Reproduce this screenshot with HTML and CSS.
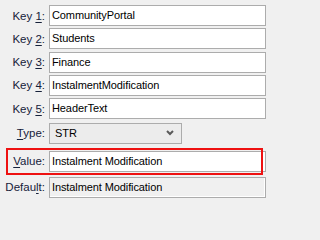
FILE: index.html
```html
<!DOCTYPE html>
<html>
<head>
<meta charset="utf-8">
<link rel="stylesheet" href="styles.css">
</head>
<body>
<div class="form">
  <div class="keys">
    <div class="row"><label class="lbl">Key <u>1</u>:</label><div class="field">CommunityPortal</div></div>
    <div class="row"><label class="lbl">Key <u>2</u>:</label><div class="field">Students</div></div>
    <div class="row"><label class="lbl">Key <u>3</u>:</label><div class="field">Finance</div></div>
    <div class="row"><label class="lbl">Key <u>4</u>:</label><div class="field">InstalmentModification</div></div>
    <div class="row"><label class="lbl">Key <u>5</u>:</label><div class="field">HeaderText</div></div>
  </div>
  <div class="row type-row"><label class="lbl"><u>T</u>ype:</label>
    <div class="select"><span>STR</span>
      <svg class="chev" width="8" height="6" viewBox="0 0 8 6"><path d="M1 1 L4 4 L7 1" fill="none" stroke="#5a5a5a" stroke-width="2"/></svg>
    </div>
  </div>
  <div class="row value-row"><label class="lbl"><u>V</u>alue:</label><div class="field">Instalment Modification</div><div class="highlight"></div></div>
  <div class="row default-row"><label class="lbl">Defau<u>l</u>t:</label><div class="field disabled">Instalment Modification</div></div>
</div>
</body>
</html>
```
FILE: styles.css
```css
html, body {
  margin: 0;
  padding: 0;
  background: #f0f0f0;
  width: 266px;
  height: 202px;
  overflow: hidden;
}
.form {
  font-family: "Liberation Sans", Arial, sans-serif;
  font-size: 11.5px;
  color: #000;
  padding-top: 5px;
  display: flex;
  flex-direction: column;
}
.keys {
  display: flex;
  flex-direction: column;
  gap: 2.33px;
}
.row {
  display: grid;
  grid-template-columns: 45px 217px;
  column-gap: 4px;
  align-items: center;
  height: 21px;
}
.lbl {
  text-align: right;
  color: #16213a;
  white-space: nowrap;
}
.lbl u {
  text-decoration-thickness: 1px;
  text-underline-offset: 2px;
}
.field {
  box-sizing: border-box;
  height: 21px;
  border: 1px solid #acacac;
  background: #fff;
  padding: 0 0 0 2px;
  font-size: 11px;
  letter-spacing: -0.1px;
  line-height: 19px;
  white-space: nowrap;
  overflow: hidden;
}
.field.disabled {
  background: #f0f0f0;
  box-shadow: inset -1px -1px 0 #fff;
}
.type-row {
  margin-top: 3.5px;
  height: 21px;
}
.select {
  box-sizing: border-box;
  width: 133px;
  height: 21px;
  border: 1px solid #acacac;
  background: #ececec;
  display: flex;
  align-items: center;
  justify-content: space-between;
  padding: 0 7px 0 5px;
  font-size: 11px;
  line-height: 19px;
}
.chev {
  display: block;
}
.value-row {
  position: relative;
  margin-top: 7px;
}
.highlight {
  position: absolute;
  left: 6px;
  top: -3px;
  width: 257px;
  height: 27px;
  box-sizing: border-box;
  border: 2px solid #ee1111;
  pointer-events: none;
}
.default-row {
  margin-top: 5px;
}
```
